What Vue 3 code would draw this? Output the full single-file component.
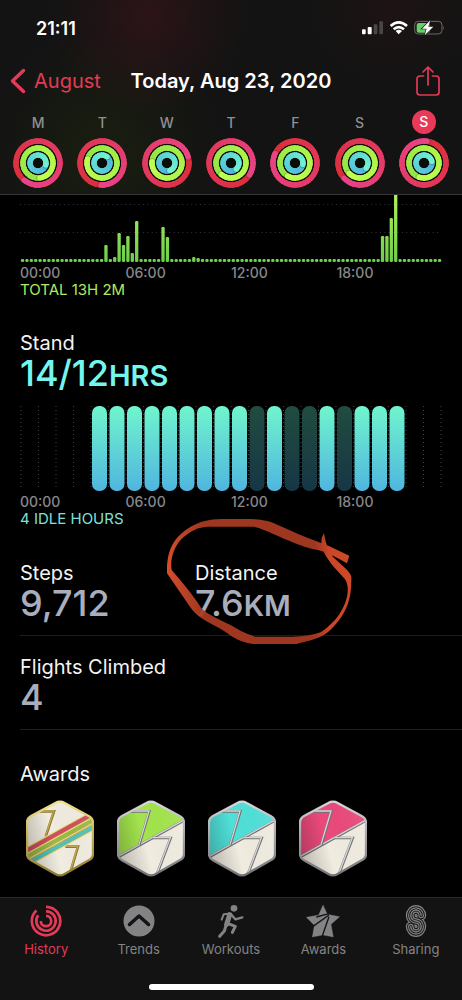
<script setup>
const ringSpecs = [
  { r: 22, from: [220, 46, 58], to: [232, 68, 134] },
  { r: 15, from: [146, 228, 72], to: [192, 255, 78] },
  { r: 8, from: [78, 182, 222], to: [112, 242, 208] }
]

const week = [
  { label: 'M', name: 'Monday', heads: [220, 173, 105] },
  { label: 'T', name: 'Tuesday', heads: [183, 286, 40] },
  { label: 'W', name: 'Wednesday', heads: [74, 275, 160] },
  { label: 'T', name: 'Thursday', heads: [123, 220, 140] },
  { label: 'F', name: 'Friday', heads: [296, 210, 100] },
  { label: 'S', name: 'Saturday', heads: [227, 227, 130] },
  { label: 'S', name: 'Sunday', heads: [8, 199, 80], today: true }
]

const STEPS = 30

function point(r, deg) {
  const a = (deg * Math.PI) / 180
  return [25 + r * Math.sin(a), 25 - r * Math.cos(a)]
}

function arc(r, a, b) {
  const [x1, y1] = point(r, a)
  const [x2, y2] = point(r, b)
  return `M${x1.toFixed(2)} ${y1.toFixed(2)}A${r} ${r} 0 0 1 ${x2.toFixed(2)} ${y2.toFixed(2)}`
}

function mix(from, to, t) {
  return `rgb(${from.map((c, i) => Math.round(c + (to[i] - c) * t)).join(',')})`
}

const days = week.map((day) => ({
  ...day,
  rings: ringSpecs.map((spec, n) => {
    const head = day.heads[n]
    const step = 360 / STEPS
    const [cx, cy] = point(spec.r, head)
    const [sx, sy] = point(spec.r, head + 50 / spec.r)
    return {
      r: spec.r,
      cx, cy, sx, sy,
      base: mix(spec.from, spec.to, 0.5),
      cap: mix(spec.from, spec.to, 1),
      arcs: Array.from({ length: STEPS }, (_, i) => ({
        d: arc(spec.r, head + i * step, head + (i + 1) * step + (i < STEPS - 1 ? 8 : 0)),
        color: mix(spec.from, spec.to, i / (STEPS - 1))
      }))
    }
  })
}))

const activity = { 19: 17, 21: 5, 22: 29, 23: 17, 24: 26, 25: 9, 26: 41, 32: 35, 33: 25, 39: 5, 40: 4, 82: 26, 83: 26, 84: 44, 85: 72 }
const moveBars = Array.from({ length: 96 }, (_, i) => {
  const h = activity[i] || 3
  return { x: 0.9 + i * 4.39, y: 67 - h, h }
})

const idle = [13, 15, 16, 18]
const standBars = Array.from({ length: 18 }, (_, i) => ({
  x: 2 + (i + 4) * 17.5,
  idle: idle.includes(i + 4)
}))
const hourLines = Array.from({ length: 25 }, (_, i) => 1 + i * 17.5)
const times = ['00:00', '06:00', '12:00', '18:00']

const awards = [
  { name: 'Perfect week, all activity', kind: 'bands', edge: '#c3ab52', light: '#f1e390', dark: '#8b7833' },
  { name: 'Perfect week, exercise', kind: 'half', fill: '#a3e44d', edge: '#a3a3a7', light: '#d8d8dc', dark: '#737376' },
  { name: 'Perfect week, stand', kind: 'half', fill: '#4fe0d8', edge: '#a3a3a7', light: '#d8d8dc', dark: '#737376' },
  { name: 'Perfect week, move', kind: 'half', fill: '#ea4a7b', edge: '#a3a3a7', light: '#d8d8dc', dark: '#737376' }
]
const hexagon = 'M88 9Q102 1 116 9L188 48Q201 55 201 68V162Q201 174 188 181L116 222Q102 230 88 222L15 181Q3 174 3 162V68Q3 55 15 48Z'
</script>

<template>
  <div class="screen">
    <header class="top">
      <div class="status">
        <span class="clock">21:11</span>
        <svg class="status-icons" viewBox="1086 62 249 46" aria-hidden="true">
          <g fill="#fff">
            <rect x="1086" y="90" width="11" height="15" rx="3" />
            <rect x="1103" y="83" width="12" height="22" rx="3" />
          </g>
          <g fill="#4b4646">
            <rect x="1121" y="75" width="11" height="30" rx="3" />
            <rect x="1138" y="66" width="11" height="39" rx="3" />
          </g>
          <g fill="none" stroke="#fff" stroke-width="8">
            <path d="M1172 80Q1196 58 1221 80" />
            <path d="M1181 90Q1196 77 1212 90" />
          </g>
          <path d="M1187 95Q1196 88 1206 95L1196 105Z" fill="#fff" />
          <rect x="1244" y="66" width="82" height="38" rx="11" fill="none" stroke="#6c6a6a" stroke-width="3" />
          <path d="M1329 79Q1334 85 1329 92Z" fill="#6c6a6a" />
          <rect x="1250" y="71" width="40" height="29" rx="6" fill="#66cf66" />
          <path d="M1291 63L1266 88H1280L1274 108L1300 82H1285Z" fill="#fff" stroke="#151515" stroke-width="4" paint-order="stroke" />
        </svg>
      </div>
      <nav class="nav" aria-label="Day">
        <a class="back" href="#august">
          <svg viewBox="0 0 16 26" aria-hidden="true"><path d="M13.500 2.500L2.500 13L13.500 23.500" fill="none" stroke="currentColor" stroke-width="3.500" stroke-linecap="round" stroke-linejoin="round" /></svg>
          <span>August</span>
        </a>
        <h1>Today, Aug 23, 2020</h1>
        <button class="share" type="button" aria-label="Share">
          <svg viewBox="0 0 26 32" aria-hidden="true">
            <g fill="none" stroke="currentColor" stroke-width="1.700" stroke-linecap="round" stroke-linejoin="round">
              <path d="M8.500 11H5Q2 11 2 14V27Q2 30 5 30H21Q24 30 24 27V14Q24 11 21 11H17.500" />
              <path d="M13 20V2M8 7L13 2L18 7" />
            </g>
          </svg>
        </button>
      </nav>
      <div class="week">
        <button v-for="day in days" :key="day.name" class="day" type="button" :aria-label="day.name">
          <span class="letter"><span :class="{ today: day.today }">{{ day.label }}</span></span>
          <svg class="rings" viewBox="0 0 50 50" aria-hidden="true">
            <circle cx="25" cy="25" r="24" fill="#0a0d08" />
            <g v-for="(ring, n) in day.rings" :key="n">
              <circle cx="25" cy="25" :r="ring.r" fill="none" :stroke="ring.base" stroke-width="5" />
              <path v-for="(a, i) in ring.arcs" :key="i" :d="a.d" :stroke="a.color" fill="none" stroke-width="5.400" />
              <circle :cx="ring.sx" :cy="ring.sy" r="2.600" fill="#000" opacity=".25" />
              <circle :cx="ring.cx" :cy="ring.cy" r="2.700" :fill="ring.cap" />
            </g>
          </svg>
        </button>
      </div>
    </header>

    <main>
      <section class="block">
        <svg class="chart" viewBox="0 0 422 67" role="img" aria-label="Exercise minutes by hour">
          <defs>
            <linearGradient id="move" x1="0" y1="0" x2="0" y2="67" gradientUnits="userSpaceOnUse">
              <stop offset="0" stop-color="#b3ee5a" />
              <stop offset="1" stop-color="#6ccf4c" />
            </linearGradient>
          </defs>
          <path d="M0 9.500H421M0 37.500H421" stroke="#333" stroke-dasharray="1 3.390" />
          <rect v-for="(b, i) in moveBars" :key="i" :x="b.x" :y="b.y" :height="b.h" width="3.300" rx="1.200" fill="url(#move)" />
        </svg>
        <div class="times"><span v-for="t in times" :key="t">{{ t }}</span></div>
        <p class="caption green">TOTAL 13H 2M</p>
      </section>

      <section class="block stand">
        <h2>Stand</h2>
        <p class="value cyan">14/12<small>HRS</small></p>
        <svg class="chart" viewBox="0 0 422 85" role="img" aria-label="Stand hours">
          <defs>
            <linearGradient id="stood" x1="0" y1="0" x2="0" y2="1">
              <stop offset="0" stop-color="#70f5cd" />
              <stop offset="1" stop-color="#50b5df" />
            </linearGradient>
            <linearGradient id="idle" x1="0" y1="0" x2="0" y2="1">
              <stop offset="0" stop-color="#204c40" />
              <stop offset="1" stop-color="#163646" />
            </linearGradient>
          </defs>
          <path v-for="x in hourLines" :key="x" :d="`M${x} 0V83`" stroke="#454545" stroke-dasharray="1 3" />
          <rect v-for="b in standBars" :key="b.x" :x="b.x" y="0" width="15" height="85" rx="7" :fill="b.idle ? 'url(#idle)' : 'url(#stood)'" />
        </svg>
        <div class="times"><span v-for="t in times" :key="t">{{ t }}</span></div>
        <p class="caption teal">4 IDLE HOURS</p>
      </section>

      <section class="stats">
        <div>
          <h2>Steps</h2>
          <p class="value">9,712</p>
        </div>
        <div class="distance">
          <h2>Distance</h2>
          <p class="value">7.6<small>KM</small></p>
          <svg class="scribble" viewBox="495 21 564 390" aria-hidden="true">
            <defs>
              <linearGradient id="ink">
                <stop offset="0" stop-color="#e8532f" />
                <stop offset=".06" stop-color="#d04a2a" />
                <stop offset=".2" stop-color="#a83a22" />
                <stop offset=".8" stop-color="#a83a22" />
                <stop offset=".88" stop-color="#d84b2a" />
                <stop offset="1" stop-color="#dc4e2b" />
              </linearGradient>
            </defs>
            <path fill="url(#ink)" opacity=".94" d="M1048 137L985 107C930 88 880 66 815 37C780 25 740 27 700 27C650 26 615 27 582 45C525 75 499 115 501 190L570 290C590 318 605 325 650 350C690 370 700 392 760 402H890C930 390 970 388 1005 345C1045 300 1055 260 1054 200C1048 180 1015 158 1000 142C985 125 977 100 972 70C960 88 964 100 968 118C980 150 1010 182 1034 206C1044 220 1046 240 1040 265C1030 300 1008 337 962 367C920 380 895 380 880 380H765C720 366 705 350 680 340C640 320 615 308 602 292C585 262 545 215 515 180C510 150 520 110 550 82C585 54 600 50 640 50H760C800 58 870 100 940 118C970 122 990 132 1041 160Z" />
          </svg>
        </div>
      </section>

      <section class="stats next">
        <div>
          <h2>Flights Climbed</h2>
          <p class="value">4</p>
        </div>
      </section>

      <section class="awards">
        <h2>Awards</h2>
        <ul>
          <li v-for="(a, n) in awards" :key="a.name">
            <svg viewBox="0 0 204 231" role="img" :aria-label="a.name">
              <defs>
                <clipPath :id="'hex' + n"><path :d="hexagon" /></clipPath>
                <linearGradient :id="'shade' + n" x1="0" y1=".6" x2="1" y2=".3">
                  <stop offset="0" stop-color="#000" stop-opacity=".22" />
                  <stop offset=".4" stop-color="#000" stop-opacity="0" />
                  <stop offset="1" stop-color="#fff" stop-opacity=".06" />
                </linearGradient>
                <linearGradient :id="'rim' + n" x1="0" y1="0" x2="0" y2="1">
                  <stop offset="0" :stop-color="a.light" />
                  <stop offset=".5" :stop-color="a.edge" />
                  <stop offset="1" :stop-color="a.dark" />
                </linearGradient>
              </defs>
              <g :clip-path="`url(#hex${n})`">
                <rect width="204" height="231" fill="#f1ece0" />
                <g fill="none" stroke-linejoin="miter">
                  <template v-if="a.kind === 'half'">
                    <path d="M0 173L204 60V0H0Z" :fill="a.fill" />
                    <path d="M0 173L204 60" :stroke="a.dark" stroke-width="8" />
                    <path d="M0 171L204 58" :stroke="a.light" stroke-width="4" />
                  </template>
                  <path :d="a.kind === 'half' ? 'M36 34H97L67 134M106 114H161L120 222' : 'M40 34H84L59 110M118 140H156L132 220'" :stroke="a.dark" stroke-width="8" />
                  <path :d="a.kind === 'half' ? 'M36 33H96L66 134M106 113H160L119 222' : 'M40 33H83L58 110M118 139H155L131 220'" :stroke="a.kind === 'half' ? a.light : a.edge" stroke-width="4" />
                  <template v-if="a.kind === 'bands'">
                    <path d="M0 143L190 38L204 52V90L10 197L0 170Z" :fill="a.edge" />
                    <path d="M0 153L200 42" stroke="#d34d5f" stroke-width="12" />
                    <path d="M0 171L204 58" stroke="#93bd42" stroke-width="10" />
                    <path d="M10 187L204 80" stroke="#4fc2bd" stroke-width="11" />
                    <path d="M0 143L200 32M0 163L204 50M4 179L204 68M12 195L204 90" :stroke="a.light" stroke-width="3" />
                  </template>
                </g>
                <rect width="204" height="231" :fill="`url(#shade${n})`" />
              </g>
              <path :d="hexagon" fill="none" :stroke="`url(#rim${n})`" stroke-width="7" />
            </svg>
          </li>
        </ul>
      </section>
    </main>

    <footer>
      <nav class="tabs" aria-label="Main">
        <a class="tab active" href="#history" aria-current="page">
          <svg viewBox="-17 -17 34 34" aria-hidden="true">
            <g fill="none" stroke="currentColor" stroke-width="2.700">
              <path d="M0 -14.200A14.200 14.200 0 1 1 -9.500 -10.500" />
              <path d="M0 -9.700A9.700 9.700 0 1 1 -7.800 -5.800" />
              <path d="M0 -5.200A5.200 5.200 0 1 1 -5.200 0" />
            </g>
          </svg>
          <span>History</span>
        </a>
        <a class="tab" href="#trends">
          <svg viewBox="-17 -17 34 34" aria-hidden="true">
            <circle r="15.500" fill="currentColor" />
            <path d="M-9.500 3.500L0 -5L9.500 3.500" fill="none" stroke="#131313" stroke-width="3.500" stroke-linecap="round" stroke-linejoin="round" />
          </svg>
          <span>Trends</span>
        </a>
        <a class="tab" href="#workouts">
          <svg viewBox="642 40 102 102" aria-hidden="true">
            <circle cx="702" cy="53" r="10" fill="currentColor" />
            <g fill="none" stroke="currentColor" stroke-linecap="round" stroke-linejoin="round">
              <path d="M689 72L680 101" stroke-width="15" />
              <path d="M687 69L671 71L665 87" stroke-width="6" />
              <path d="M693 71L706 86L727 80" stroke-width="7" />
              <path d="M684 99L706 107L697 125" stroke-width="9" />
              <path d="M678 104L673 121L659 137" stroke-width="9" />
            </g>
          </svg>
          <span>Workouts</span>
        </a>
        <a class="tab" href="#awards">
          <svg viewBox="253 44 102 102" aria-hidden="true">
            <path d="M304 47L317 75L354 82L328 105L335 143L304 137L272 143L278 108L254 84L291 77Z" fill="currentColor" stroke="currentColor" stroke-linejoin="round" />
            <path d="M284 83L322 73M322 77L274 111M322 82L301 142" fill="none" stroke="#131313" stroke-width="4" />
          </svg>
          <span>Awards</span>
        </a>
        <a class="tab" href="#sharing">
          <svg viewBox="0 0 34 34" aria-hidden="true">
            <defs>
              <path id="ess" d="M22.200 11.500A5.200 5.500 0 1 0 17 17A5.200 5.500 0 1 1 11.800 22.500" fill="none" stroke-linecap="round" />
            </defs>
            <use href="#ess" stroke="currentColor" stroke-width="10" />
            <use href="#ess" stroke="#131313" stroke-width="7.400" />
            <use href="#ess" stroke="currentColor" stroke-width="5.600" />
            <use href="#ess" stroke="#131313" stroke-width="3.200" />
            <use href="#ess" stroke="currentColor" stroke-width="1.400" />
          </svg>
          <span>Sharing</span>
        </a>
      </nav>
      <div class="home"></div>
    </footer>
  </div>
</template>

<style>
body {
  background: #000;
}
</style>

<style scoped>
.screen {
  display: flex;
  flex-direction: column;
  min-height: 100vh;
  background: #000;
  color: #f4f4f4;
  font-family: Inter, "Liberation Sans", sans-serif;
  font-size: 20px;
}
h1, h2, p, ul {
  margin: 0;
  padding: 0;
  font-weight: 400;
}
svg {
  display: block;
}
a {
  color: inherit;
  text-decoration: none;
}
button {
  padding: 0;
  border: 0;
  background: none;
  color: inherit;
  font: inherit;
}
.top {
  border-bottom: 1px solid #363636;
  background:
    radial-gradient(circle at 32% 8%, rgba(90, 20, 30, .35), transparent 100px),
    radial-gradient(circle at 85% 0, rgba(70, 20, 28, .22), transparent 90px),
    radial-gradient(circle at 22% 78%, rgba(40, 56, 8, .3), transparent 120px),
    #131313;
}
.status {
  display: flex;
  align-items: center;
  justify-content: space-between;
  height: 56px;
  padding: 0 17px 0 36px;
}
.clock {
  font-size: 18px;
  font-weight: 600;
  color: #fff;
}
.status-icons {
  width: 83px;
}
.nav {
  display: grid;
  grid-template-columns: 1fr auto 1fr;
  align-items: center;
  height: 50px;
  padding: 0 10px;
}
.back {
  display: flex;
  align-items: center;
  gap: 8px;
  color: #e33a57;
}
.back svg {
  width: 16px;
}
h1 {
  font-size: 20px;
  font-weight: 600;
  color: #fff;
  white-space: nowrap;
}
.share {
  justify-self: end;
  padding-right: 11px;
  color: #e33a57;
}
.share svg {
  width: 26px;
}
.week {
  display: grid;
  grid-template-columns: repeat(7, 1fr);
  padding: 0 6px 6px;
}
.day {
  display: flex;
  flex-direction: column;
  align-items: center;
}
.letter {
  display: flex;
  align-items: center;
  height: 32px;
  font-size: 14px;
  font-weight: 500;
  color: #8f8f92;
}
.today {
  width: 24px;
  border-radius: 50%;
  background: #e83a58;
  color: #fff;
  line-height: 24px;
  text-align: center;
}
.rings {
  width: 50px;
}
.block {
  padding: 0 20px;
}
.chart {
  width: 100%;
}
.times {
  display: grid;
  grid-template-columns: repeat(4, 1fr);
  margin-top: 3px;
  font-size: 14px;
  font-weight: 500;
  line-height: 16px;
  color: #88888b;
}
.caption {
  font-size: 15px;
  line-height: 18px;
}
.green {
  color: #aeea5c;
}
.teal {
  color: #7fe0dc;
}
.stand {
  padding-top: 32px;
}
.stand .chart {
  margin-top: 15px;
}
h2 {
  font-size: 20px;
  line-height: 24px;
}
.value {
  font-size: 36px;
  font-weight: 500;
  line-height: 36px;
  color: #a9adbc;
}
.value small {
  font-size: 29px;
  font-weight: 600;
  line-height: 1;
}
.cyan {
  color: #74f6ee;
}
.stats {
  display: grid;
  grid-template-columns: 175px 1fr;
  margin-left: 20px;
  padding: 33px 0 14px;
  border-bottom: 1px solid #1d1d1f;
}
.next {
  display: block;
  padding-top: 19px;
}
.distance {
  position: relative;
}
.scribble {
  position: absolute;
  top: -44px;
  left: -30px;
  width: 188px;
}
.awards {
  padding: 32px 20px 20px;
}
.awards ul {
  display: flex;
  gap: 23px;
  margin: 14px 0 0 6px;
  list-style: none;
}
.awards li {
  width: 68px;
}
footer {
  margin-top: auto;
  padding-bottom: 10px;
  border-top: 1px solid #2a2a2a;
  background: #131313;
}
.tabs {
  display: grid;
  grid-template-columns: repeat(5, 1fr);
}
.tab {
  display: flex;
  flex-direction: column;
  align-items: center;
  gap: 2px;
  padding-top: 6px;
  font-size: 13px;
  line-height: 18px;
  color: #838385;
}
.tab svg {
  width: 34px;
}
.active {
  color: #e33a57;
}
.home {
  width: 165px;
  height: 6px;
  margin: 26px auto 0;
  border-radius: 3px;
  background: #fff;
}
</style>
